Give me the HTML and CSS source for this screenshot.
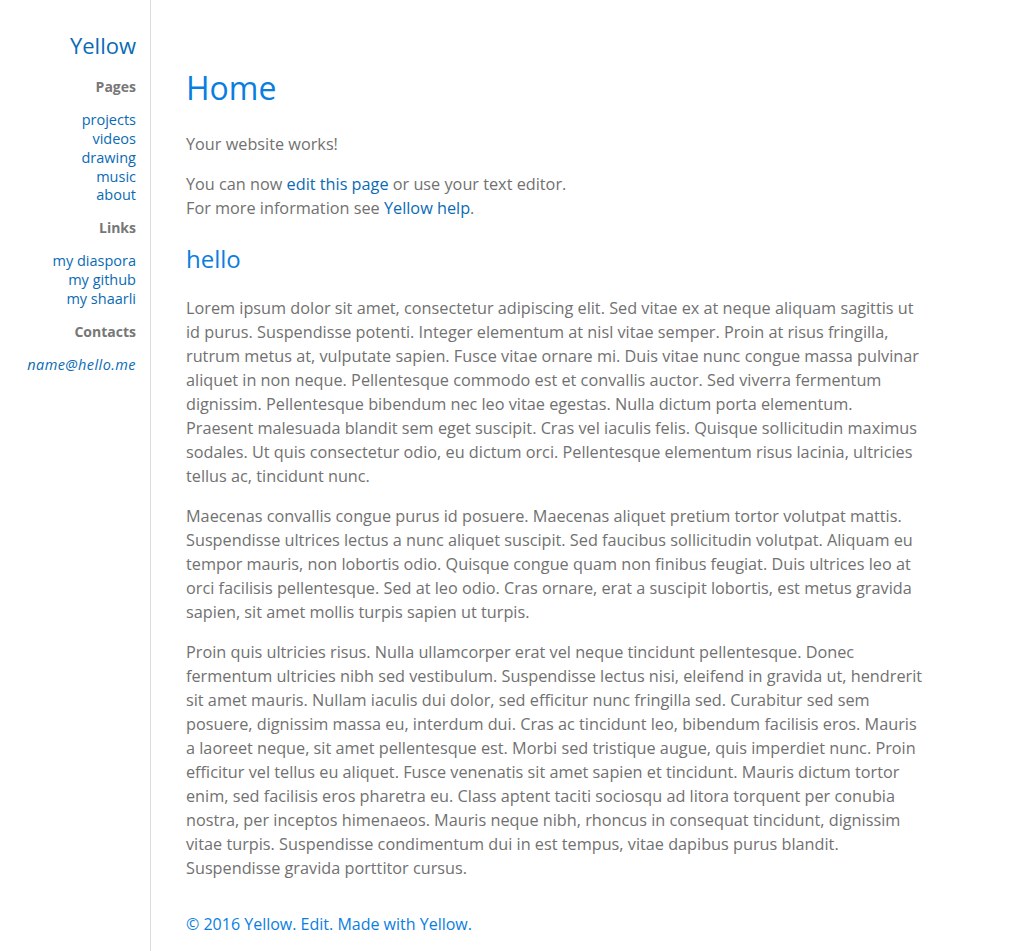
FILE: index.html
```html
<!DOCTYPE html>
<html>
<head>
<meta charset="utf-8">
<title>Home</title>
<link rel="stylesheet" href="styles.css">
</head>
<body>
<div class="page">
  <aside class="sidebar">
    <div class="site-title"><a href="#">Yellow</a></div>
    <h4 class="side-head">Pages</h4>
    <ul class="side-list">
      <li><a href="#">projects</a></li>
      <li><a href="#">videos</a></li>
      <li><a href="#">drawing</a></li>
      <li><a href="#">music</a></li>
      <li><a href="#">about</a></li>
    </ul>
    <h4 class="side-head">Links</h4>
    <ul class="side-list">
      <li><a href="#">my diaspora</a></li>
      <li><a href="#">my github</a></li>
      <li><a href="#">my shaarli</a></li>
    </ul>
    <h4 class="side-head">Contacts</h4>
    <p class="side-mail"><a href="#">name@hello.me</a></p>
  </aside>
  <main class="main">
    <h1 class="title">Home</h1>
    <p>Your website works!</p>
    <p>You can now <a href="#">edit this page</a> or use your text editor.<br>For more information see <a href="#">Yellow help</a>.</p>
    <h2 class="subtitle">hello</h2>
    <p>Lorem ipsum dolor sit amet, consectetur adipiscing elit. Sed vitae ex at neque aliquam sagittis ut id purus. Suspendisse potenti. Integer elementum at nisl vitae semper. Proin at risus fringilla, rutrum metus at, vulputate sapien. Fusce vitae ornare mi. Duis vitae nunc congue massa pulvinar aliquet in non neque. Pellentesque commodo est et convallis auctor. Sed viverra fermentum dignissim. Pellentesque bibendum nec leo vitae egestas. Nulla dictum porta elementum. Praesent malesuada blandit sem eget suscipit. Cras vel iaculis felis. Quisque sollicitudin maximus sodales. Ut quis consectetur odio, eu dictum orci. Pellentesque elementum risus lacinia, ultricies tellus ac, tincidunt nunc.</p>
    <p>Maecenas convallis congue purus id posuere. Maecenas aliquet pretium tortor volutpat mattis. Suspendisse ultrices lectus a nunc aliquet suscipit. Sed faucibus sollicitudin volutpat. Aliquam eu tempor mauris, non lobortis odio. Quisque congue quam non finibus feugiat. Duis ultrices leo at orci facilisis pellentesque. Sed at leo odio. Cras ornare, erat a suscipit lobortis, est metus gravida sapien, sit amet mollis turpis sapien ut turpis.</p>
    <p>Proin quis ultricies risus. Nulla ullamcorper erat vel neque tincidunt pellentesque. Donec fermentum ultricies nibh sed vestibulum. Suspendisse lectus nisi, eleifend in gravida ut, hendrerit sit amet mauris. Nullam iaculis dui dolor, sed efficitur nunc fringilla sed. Curabitur sed sem posuere, dignissim massa eu, interdum dui. Cras ac tincidunt leo, bibendum facilisis eros. Mauris a laoreet neque, sit amet pellentesque est. Morbi sed tristique augue, quis imperdiet nunc. Proin efficitur vel tellus eu aliquet. Fusce venenatis sit amet sapien et tincidunt. Mauris dictum tortor enim, sed facilisis eros pharetra eu. Class aptent taciti sociosqu ad litora torquent per conubia nostra, per inceptos himenaeos. Mauris neque nibh, rhoncus in consequat tincidunt, dignissim vitae turpis. Suspendisse condimentum dui in est tempus, vitae dapibus purus blandit. Suspendisse gravida porttitor cursus.</p>
    <footer class="footer">© 2016 Yellow. <a href="#">Edit</a>. Made with <a href="#">Yellow</a>.</footer>
  </main>
</div>
</body>
</html>
```

FILE: styles.css
```css
html, body {
  margin: 0;
  padding: 0;
  background: #fff;
}
body {
  font-family: "Open Sans", "Noto Sans", sans-serif;
  font-size: 16.26px;
  line-height: 24px;
  color: #717171;
}
a {
  color: #0a6bb5;
  text-decoration: none;
}
.page {
  display: flex;
  min-height: 951px;
}
.sidebar {
  width: 136px;
  flex: none;
  padding: 28px 14px 0 0;
  border-right: 1px solid #ddd;
  text-align: right;
  font-size: 14.5px;
  line-height: 18.75px;
}
.site-title {
  font-size: 22px;
  line-height: 34px;
  margin: 0 0 16px;
}
.site-title a { color: #0a6bb5; }
.side-head {
  margin: 0 0 14.5px;
  font-size: 14px;
  font-weight: bold;
  color: #777;
  line-height: 18.75px;
}
.side-list {
  list-style: none;
  margin: 0 0 14px;
  padding: 0;
}
.side-list a { color: #0a6bb5; }
.side-mail {
  margin: 0;
  font-style: italic;
  letter-spacing: 0.42px;
}
.side-mail a { color: #0a6bb5; }
.main {
  padding: 64px 0 0 35px;
  width: 737.5px;
}
.title {
  margin: 0 0 20px;
  font-size: 32px;
  line-height: 48px;
  font-weight: normal;
  color: #0a7ee0;
}
.main p {
  margin: 0 0 16px;
}
.subtitle {
  margin: 22px 0 20px;
  font-size: 24px;
  line-height: 34px;
  font-weight: normal;
  color: #0a7ee0;
}
.footer {
  margin-top: 32px;
  font-size: 16px;
  color: #0a7ee0;
  padding-bottom: 20px;
}
.footer a { color: #0a7ee0; }
```
